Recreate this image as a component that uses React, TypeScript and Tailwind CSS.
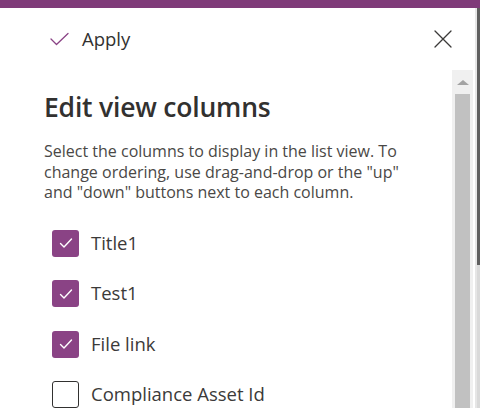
const columns = [
  { name: "Title1", checked: true },
  { name: "Test1", checked: true },
  { name: "File link", checked: true },
  { name: "Compliance Asset Id", checked: false },
];

const CheckBox = ({ checked }: { checked: boolean }) =>
  checked ? (
    <div className="flex h-[27px] w-[27px] shrink-0 items-center justify-center rounded-[3px] bg-[#8a4385]">
      <svg width="16" height="16" viewBox="0 0 16 16" fill="none">
        <path d="M2.5 8.5 L6 12 L13.5 4" stroke="white" strokeWidth="1.4" strokeLinecap="round" strokeLinejoin="round" />
      </svg>
    </div>
  ) : (
    <div className="h-[27px] w-[27px] shrink-0 rounded-[3px] border-[1.5px] border-[#323130] bg-white" />
  );

export default function App() {
  return (
    <div
      className="flex h-[408px] w-[480px] flex-col overflow-hidden bg-white"
      style={{ fontFamily: '"Open Sans", "Noto Sans", sans-serif' }}
    >
      <div className="h-2 shrink-0 bg-[#7f3b79]" />
      <div className="flex flex-1 overflow-hidden">
        <div className="flex flex-1 flex-col">
          {/* command bar */}
          <div className="flex h-[62px] shrink-0 items-center justify-between pl-[50px] pr-[23px]">
            <div className="flex items-center gap-[13px]">
              <svg width="19" height="14" viewBox="0 0 19 14" fill="none">
                <path d="M1 7 L6.5 12.5 L18 1.5" stroke="#8a4385" strokeWidth="1.3" strokeLinecap="round" strokeLinejoin="round" />
              </svg>
              <span className="text-[18.5px] leading-none text-[#323130]">Apply</span>
            </div>
            <svg width="18" height="18" viewBox="0 0 18 18" fill="none">
              <path d="M1 1 L17 17 M17 1 L1 17" stroke="#3b3a39" strokeWidth="1.3" strokeLinecap="round" />
            </svg>
          </div>
          {/* scroll area */}
          <div className="flex flex-1 overflow-hidden">
            <div className="flex-1 pl-[44px] pt-[20px]">
              <h1 className="text-[26.5px] font-semibold leading-[34px] tracking-[-0.2px] text-[#323130]">
                Edit view columns
              </h1>
              <p className="mt-[17px] w-[366px] text-[16px] leading-[20.5px] text-[#4a4846]">
                Select the columns to display in the list view. To change ordering, use drag-and-drop or the "up" and "down" buttons next to each column.
              </p>
              <div className="mt-[27px] flex flex-col gap-[23.5px] pl-[8px]">
                {columns.map((c) => (
                  <div key={c.name} className="flex items-center gap-[12px]">
                    <CheckBox checked={c.checked} />
                    <span className="text-[18.5px] leading-none text-[#3b3a39]">{c.name}</span>
                  </div>
                ))}
              </div>
            </div>
            {/* scrollbar */}
            <div className="mr-[2px] flex w-[21px] shrink-0 flex-col items-center bg-[#f0f0f0] px-[3px]">
              <div className="flex h-[24px] w-full items-center justify-center">
                <div className="h-0 w-0 border-x-[6px] border-b-[5px] border-x-transparent border-b-[#a3a3a3]" />
              </div>
              <div className="w-full flex-1 bg-[#c1c1c1]" />
            </div>
          </div>
        </div>
        {/* outer edge */}
        <div className="flex w-[5px] shrink-0">
          <div className="w-[2px] bg-[#e6e6e6]" />
          <div className="flex w-[3px] flex-col">
            <div className="h-[257px] bg-[#5f5f5f]" />
            <div className="flex-1 bg-[#d9d9d9]" />
          </div>
        </div>
      </div>
    </div>
  );
}
